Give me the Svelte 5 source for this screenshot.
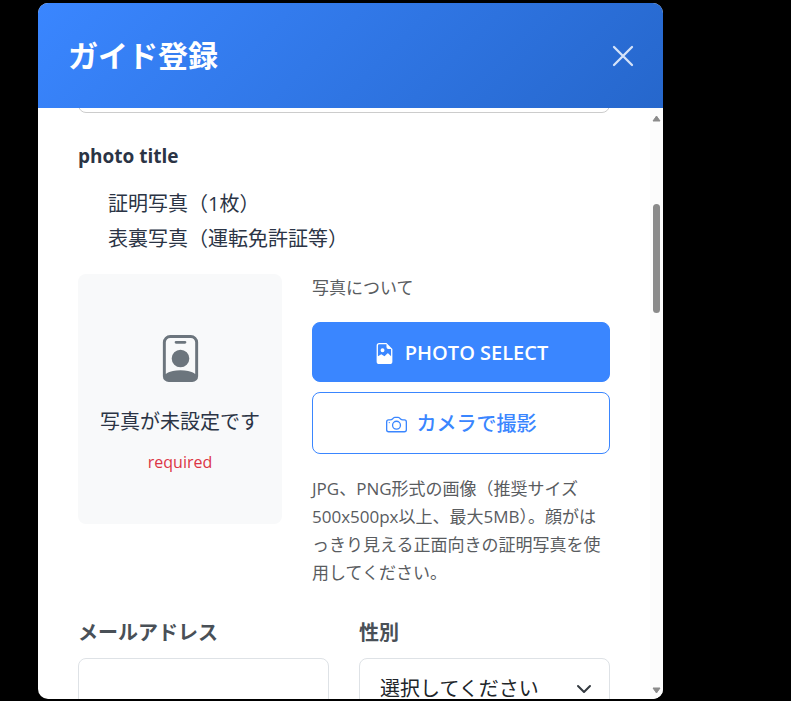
<script>
  let email = $state('');
  let gender = $state('');
  let previous = $state('');
  const notes = ['証明写真（1枚）', '表裏写真（運転免許証等）'];
</script>

<div class="backdrop">
  <div class="modal" role="dialog" aria-modal="true" aria-labelledby="modal-title">
    <header>
      <h1 id="modal-title">ガイド登録</h1>
      <button type="button" class="close" aria-label="閉じる">
        <svg viewBox="0 0 22 22" width="22" height="22"><path d="M2 2 20 20M20 2 2 20" fill="none" stroke="currentColor" stroke-width="2.3" stroke-linecap="round" /></svg>
      </button>
    </header>

    <div class="body">
      <form class="content">
        <input class="field previous" type="text" aria-label="name" bind:value={previous} />

        <section>
          <h2>photo title</h2>
          <ul>
            {#each notes as note}
              <li>{note}</li>
            {/each}
          </ul>

          <div class="photo-row">
            <div class="preview">
              <svg viewBox="0 0 16 16" width="47" height="47" fill="currentColor">
                <path d="M6.5 2a.5.5 0 0 0 0 1h3a.5.5 0 0 0 0-1zM11 8a3 3 0 1 1-6 0 3 3 0 0 1 6 0" />
                <path d="M4.5 0A2.5 2.5 0 0 0 2 2.500V14a2 2 0 0 0 2 2h8a2 2 0 0 0 2-2V2.500A2.500 2.500 0 0 0 11.500 0zM3 2.500A1.500 1.500 0 0 1 4.500 1h7A1.500 1.500 0 0 1 13 2.500v10.795a4.200 4.200 0 0 0-.776-.492C11.392 12.387 10.063 12 8 12s-3.392.387-4.224.803a4.200 4.200 0 0 0-.776.492z" />
              </svg>
              <p class="unset">写真が未設定です</p>
              <p class="required">required</p>
            </div>

            <div class="actions">
              <p class="small">写真について</p>
              <button type="button" class="btn primary">
                <svg viewBox="0 0 16 16" width="21" height="21" fill="currentColor">
                  <path d="M6.502 7a1.5 1.5 0 1 0 0-3 1.5 1.5 0 0 0 0 3" />
                  <path d="M14 14a2 2 0 0 1-2 2H4a2 2 0 0 1-2-2V2a2 2 0 0 1 2-2h5.5L14 4.5zM4 1a1 1 0 0 0-1 1v8l2.224-1.224a.5.5 0 0 1 .61-.075L8 10l2.157-2.020a.5.5 0 0 1 .76-.063L13 10V4.500h-2A1.500 1.500 0 0 1 9.500 3V1z" />
                </svg>
                <span>PHOTO SELECT</span>
              </button>
              <button type="button" class="btn outline">
                <svg viewBox="0 0 16 16" width="21" height="21" fill="currentColor">
                  <path d="M15 12a1 1 0 0 1-1 1H2a1 1 0 0 1-1-1V6a1 1 0 0 1 1-1h1.172a3 3 0 0 0 2.120-.879l.830-.828A1 1 0 0 1 6.827 3h2.344a1 1 0 0 1 .707.293l.828.828A3 3 0 0 0 12.828 5H14a1 1 0 0 1 1 1zM2 4a2 2 0 0 0-2 2v6a2 2 0 0 0 2 2h12a2 2 0 0 0 2-2V6a2 2 0 0 0-2-2h-1.172a2 2 0 0 1-1.414-.586l-.828-.828A2 2 0 0 0 9.172 2H6.828a2 2 0 0 0-1.414.586l-.828.828A2 2 0 0 1 3.172 4z" />
                  <path d="M8 11a2.500 2.500 0 1 1 0-5 2.500 2.500 0 0 1 0 5m0 1a3.500 3.500 0 1 0 0-7 3.500 3.500 0 0 0 0 7M3 6.500a.5.5 0 1 1-1 0 .5.5 0 0 1 1 0" />
                </svg>
                <span>カメラで撮影</span>
              </button>
              <p class="small help">JPG、PNG形式の画像（推奨サイズ500x500px以上、最大5MB）。顔がはっきり見える正面向きの証明写真を使用してください。</p>
            </div>
          </div>
        </section>

        <div class="fields">
          <div class="group">
            <label for="email">メールアドレス</label>
            <input id="email" class="field" type="email" bind:value={email} />
          </div>
          <div class="group">
            <label for="gender">性別</label>
            <select id="gender" class="field" bind:value={gender}>
              <option value="">選択してください</option>
              <option value="male">男性</option>
              <option value="female">女性</option>
            </select>
          </div>
        </div>
      </form>

      <div class="scrollbar" aria-hidden="true">
        <svg viewBox="0 0 9 7" width="9" height="7"><path d="M4.500 1 8 6H1z" fill="#8b8b8b" stroke="#8b8b8b" stroke-linejoin="round" /></svg>
        <div class="track"><div class="thumb"></div></div>
        <svg viewBox="0 0 9 7" width="9" height="7"><path d="M4.500 6 8 1H1z" fill="#8b8b8b" stroke="#8b8b8b" stroke-linejoin="round" /></svg>
      </div>
    </div>
  </div>
</div>

<style>
  :global(body) {
    margin: 0;
    background: #000;
  }

  .backdrop {
    box-sizing: border-box;
    height: 100vh;
    padding: 3px 128px 2px 38px;
    background: #000;
    color: #2b3445;
    font-family: 'Open Sans', 'Noto Sans CJK JP', sans-serif;
    font-size: 20px;
    line-height: 30px;
  }

  .backdrop * {
    box-sizing: border-box;
  }

  h1, h2, p, ul {
    margin: 0;
    padding: 0;
  }

  .modal {
    display: flex;
    flex-direction: column;
    height: 100%;
    overflow: hidden;
    border-radius: 10px;
    background: #fff;
  }

  header {
    display: flex;
    flex: none;
    align-items: center;
    justify-content: space-between;
    padding: 30px 29px 30px 30px;
    background: linear-gradient(135deg, #3a86ff, #2667cc);
    color: #fff;
  }

  h1 {
    font-size: 30px;
    line-height: 45px;
    font-weight: 700;
  }

  .close {
    display: flex;
    padding: 0;
    border: 0;
    background: none;
    color: #d5e3f9;
  }

  .body {
    display: flex;
    flex: 1;
    min-height: 0;
  }

  .content {
    flex: 1;
    min-width: 0;
    overflow: hidden;
    padding: 0 40px;
  }

  .field {
    display: block;
    width: 100%;
    height: 62px;
    padding: 0 20px;
    border: 1px solid #dee2e6;
    border-radius: 8px;
    background: #fff;
    color: #212529;
    font: inherit;
  }

  .previous {
    margin-top: -57px;
    border-color: #ccc;
  }

  h2 {
    margin-top: 28px;
    font-size: 19px;
    line-height: 30px;
    font-weight: 700;
  }

  ul {
    margin: 15px 0 18px;
    padding-left: 30px;
    list-style: none;
  }

  li {
    line-height: 35px;
  }

  .photo-row {
    display: grid;
    grid-template-columns: 204fr 298fr;
    gap: 30px;
    align-items: start;
  }

  .preview {
    display: flex;
    flex-direction: column;
    align-items: center;
    height: 250px;
    padding-top: 61px;
    border-radius: 8px;
    background: #f8f9fa;
    color: #6c757d;
  }

  .unset {
    margin-top: 25px;
    color: #2b3445;
  }

  .required {
    margin-top: 11px;
    color: #dc3545;
    font-size: 16px;
    line-height: 28px;
  }

  .actions {
    display: flex;
    flex-direction: column;
    gap: 10px;
  }

  .small {
    color: #595c5f;
    font-size: 17px;
    line-height: 28px;
  }

  .actions .small:first-child {
    margin-bottom: 10px;
  }

  .help {
    margin-top: 11px;
  }

  .btn {
    display: flex;
    align-items: center;
    justify-content: center;
    gap: 10px;
    height: 60px;
    padding: 2px 0 0;
    border: 1px solid #3a86ff;
    border-radius: 8px;
    font: inherit;
    font-weight: 600;
  }

  .primary {
    background: #3a86ff;
    color: #fff;
  }

  .outline {
    height: 62px;
    background: #fff;
    color: #3a86ff;
    font-weight: 500;
  }

  .fields {
    display: grid;
    grid-template-columns: 1fr 1fr;
    gap: 30px;
    margin-top: 31px;
  }

  label {
    display: block;
    margin-bottom: 10px;
    color: #495057;
    font-weight: 600;
  }

  select.field {
    appearance: none;
    background: #fff url("data:image/svg+xml,%3Csvg xmlns='http://www.w3.org/2000/svg' viewBox='0 0 16 16'%3E%3Cpath fill='none' stroke='%23343a40' stroke-linecap='round' stroke-linejoin='round' stroke-width='2' d='m2 5 6 6 6-6'/%3E%3C/svg%3E") no-repeat right 17px center / 16px 16px;
  }

  .scrollbar {
    display: flex;
    flex: none;
    flex-direction: column;
    align-items: center;
    width: 13px;
    padding: 7px 0 5px;
    background: #fcfcfc;
  }

  .track {
    flex: 1;
    padding-top: 82px;
  }

  .thumb {
    width: 7px;
    height: 109px;
    border-radius: 4px;
    background: #8b8b8b;
  }
</style>
